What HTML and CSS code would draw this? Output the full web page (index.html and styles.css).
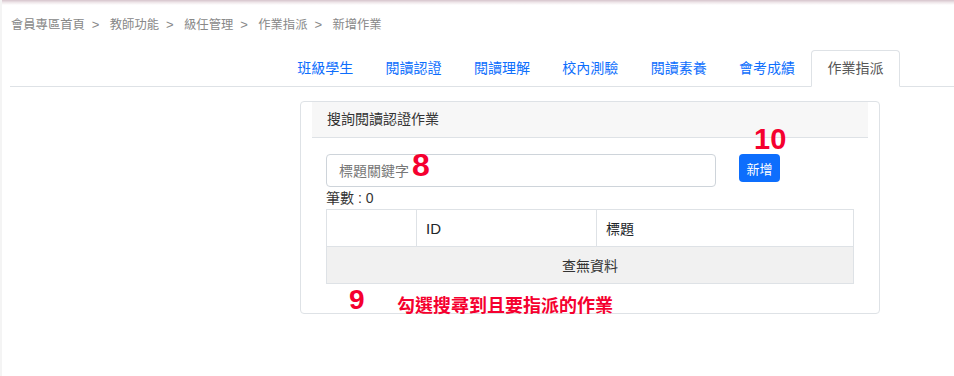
FILE: index.html
```html
<!DOCTYPE html>
<html lang="zh-Hant">

<head>
    <meta charset="UTF-8">
    <meta name="viewport" content="width=device-width, initial-scale=1.0">
    <title>新增作業</title>
    <link rel="stylesheet" href="styles.css">
</head>

<body>
    <div class="topline"></div>
    <div class="breadcrumb">
        <span>會員專區首頁</span><span class="sep">&gt;</span>
        <span>教師功能</span><span class="sep">&gt;</span>
        <span>級任管理</span><span class="sep">&gt;</span>
        <span>作業指派</span><span class="sep">&gt;</span>
        <span>新增作業</span>
    </div>

    <ul class="tabs">
        <li class="tab">班級學生</li>
        <li class="tab">閱讀認證</li>
        <li class="tab">閱讀理解</li>
        <li class="tab">校內測驗</li>
        <li class="tab">閱讀素養</li>
        <li class="tab">會考成績</li>
        <li class="tab active">作業指派</li>
    </ul>

    <div class="card">
        <div class="card-header">搜詢閱讀認證作業</div>
        <div class="card-body">
            <div class="search-row">
                <input type="text" class="keyword" placeholder="標題關鍵字">
                <button class="btn-add">新增</button>
            </div>
            <div class="count">筆數 : 0</div>
            <table class="list">
                <tr>
                    <th class="col-check"></th>
                    <th class="col-id">ID</th>
                    <th>標題</th>
                </tr>
                <tr class="empty">
                    <td colspan="3">查無資料</td>
                </tr>
            </table>
        </div>

        <span class="mark mark-8">8</span>
        <span class="mark mark-10">10</span>
        <span class="mark mark-9">9</span>
        <span class="note">勾選搜尋到且要指派的作業</span>
    </div>
</body>

</html>
```

FILE: styles.css
```css
* {
    margin: 0;
    padding: 0;
    box-sizing: border-box;
}

body {
    font-family: "Liberation Sans", "Noto Sans CJK TC", sans-serif;
    font-size: 14px;
    color: #212529;
    background: #fff;
    border-left: 2px solid #f4f4f4;
    min-height: 376px;
}

.topline {
    height: 5px;
    background: linear-gradient(#d6c4cc, #efe7ea 50%, #fff);
}

.breadcrumb {
    padding: 10px 0 0 9px;
    font-size: 12.3px;
    line-height: 20px;
    color: #888;
}

.breadcrumb .sep {
    padding: 0 7px;
    font-size: 13px;
}

.tabs {
    list-style: none;
    display: flex;
    margin: 15px 0 0 8px;
    padding-left: 271px;
    border-bottom: 1px solid #dee2e6;
}

.tab {
    padding: 7px 15.2px;
    line-height: 21px;
    color: #0d6efd;
    border: 1px solid transparent;
    border-radius: 4px 4px 0 0;
    margin-bottom: -1px;
}

.tab.active {
    color: #555;
    border-color: #dee2e6 #dee2e6 #fff;
    background: #fff;
}

.card {
    position: relative;
    margin: 14px 0 0 298px;
    width: 580px;
    border: 1px solid #dee2e6;
    border-radius: 4px;
    padding: 0 11px;
}

.card-header {
    padding: 7px 15px;
    line-height: 21px;
    background: #f7f7f7;
    border-bottom: 1px solid #dee2e6;
    color: #333;
}

.card-body {
    padding: 16px 14px 29px;
}

.search-row {
    display: flex;
    align-items: flex-start;
    gap: 23px;
}

.keyword {
    width: 390px;
    height: 33px;
    padding: 0 12px;
    border: 1px solid #ced4da;
    border-radius: 4px;
    font-family: inherit;
    font-size: 14px;
}

.keyword::placeholder {
    color: #777;
}

.btn-add {
    width: 41px;
    height: 28px;
    border: none;
    border-radius: 4px;
    background: #0d6efd;
    color: #fff;
    font-family: inherit;
    font-size: 13px;
}

.count {
    margin-top: 1px;
    line-height: 21px;
    color: #333;
}

.list {
    width: 100%;
    border-collapse: collapse;
}

.list th,
.list td {
    height: 37px;
    border: 1px solid #dee2e6;
    padding: 0 9px;
    font-weight: normal;
    text-align: left;
}

.col-check {
    width: 90px;
}

.col-id {
    width: 180px;
    font-size: 15px;
}

.empty td {
    background: #f1f1f1;
    text-align: center;
    color: #333;
}

.mark,
.note {
    position: absolute;
    color: #f5002f;
    font-weight: bold;
    line-height: 1;
}

.mark-8 {
    left: 111px;
    top: 47px;
    font-size: 32px;
}

.mark-10 {
    left: 453px;
    top: 23px;
    font-size: 29px;
}

.mark-9 {
    left: 48px;
    top: 184px;
    font-size: 28px;
}

.note {
    left: 96px;
    top: 195px;
    font-size: 18px;
}
```
